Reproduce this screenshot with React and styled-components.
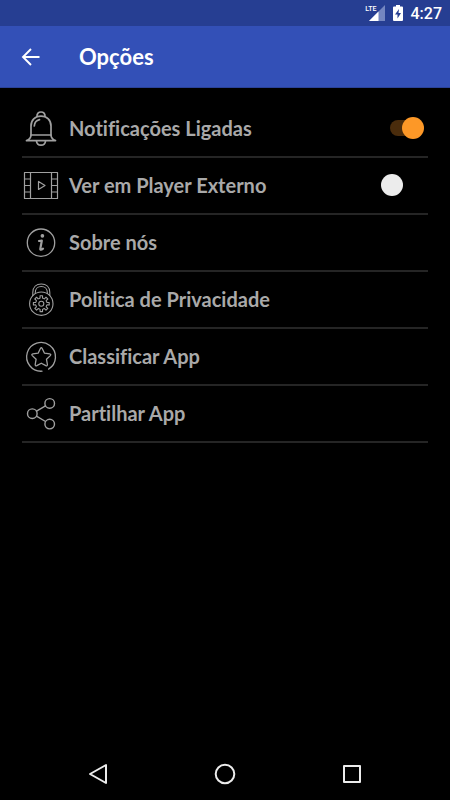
import React, {useState} from 'react';
import styled, {createGlobalStyle, css} from 'styled-components';

const GlobalStyle = createGlobalStyle`
*{
    box-sizing: border-box;
}
body{
    margin: 0;
    background: #000;
    font-family: Lato, "Open Sans", sans-serif;
    font-variant-ligatures: none;
}
`

const Page = styled.div`
min-height: 100vh;
display: flex;
flex-direction: column;
background: #000;
`

const StatusBar = styled.div`
height: 26px;
padding: 0 8px;
display: flex;
align-items: center;
justify-content: flex-end;
gap: 8px;
background: #263e92;
color: #fff;
`

const Clock = styled.time`
padding-top: 2px;
font: 500 16px/24px Roboto, sans-serif;
`

const Network = styled.div`
position: relative;
height: 16px;
`

// sits over the empty corner of the signal triangle
const NetworkType = styled.span`
position: absolute;
top: 0;
right: 8px;
font: 500 7px/8px Roboto, sans-serif;
`

const AppBar = styled.header`
height: 62px;
padding: 0 16px;
display: flex;
align-items: center;
gap: 33px;
background: #3350b7;
border-bottom: 1px solid #2a4298;
color: #fff;
`

const BackButton = styled.button`
width: 30px;
height: 30px;
padding: 0;
border: 0;
background: none;
color: inherit;
`

const Title = styled.h1`
margin: 0;
font-size: 22px;
line-height: 30px;
font-weight: 700;
`

const Options = styled.ul`
flex: 1;
margin: 0;
padding: 13px 22px;
list-style: none;
`

const Item = styled.li`
border-bottom: 2px solid #252525;
`

const rowStyle = css`
height: 55px;
display: flex;
align-items: center;
gap: 9px;
color: #a9a9a9;
font-size: 20px;
line-height: 24px;
font-weight: 700;
text-decoration: none;
`

const RowLabel = styled.label`
${rowStyle}
`

const RowLink = styled.a`
${rowStyle}
`

const RowText = styled.span`
flex: 1;
padding-bottom: 2px;
`

const Switch = styled.input`
appearance: none;
position: relative;
width: 43px;
height: 22px;
margin: 0 4px 2px 0;

&::before{
    content: "";
    position: absolute;
    top: 3px;
    left: 9px;
    width: 26px;
    height: 16px;
    border-radius: 8px;
    background: #000;
}
&::after{
    content: "";
    position: absolute;
    top: 0;
    left: 0;
    width: 22px;
    height: 22px;
    border-radius: 50%;
    background: #ececec;
}
&:checked::before{
    background: #4a2c0c;
}
&:checked::after{
    left: 21px;
    background: #fd9827;
}
`

const NavBar = styled.nav`
height: 52px;
padding: 0 35px;
display: grid;
grid-template-columns: repeat(3, 1fr);
`

const NavButton = styled.button`
display: flex;
align-items: center;
justify-content: center;
padding: 0;
border: 0;
background: none;
color: #ececec;
`

const OptionSvg = styled.svg`
flex: none;
width: 38px;
height: 37px;
fill: none;
stroke: #a0a0a0;
stroke-width: ${props => props.$weight || 1.3};
stroke-linecap: round;
stroke-linejoin: round;
`

const BellIcon = () => (
    <OptionSvg viewBox="0 0 38 37" $weight={1.7} aria-hidden="true">
        <path d="M15 6.5C14.8 3.6 16.5 2 19 2s4.2 1.6 4 4.5" />
        <path d="M9 25V16C9 10 13 6.2 19 6.2S29 10 29 16v9" />
        <path d="M9 25h20M9 25c0 2.7-1.8 4.6-4.5 5.6h29C30.8 29.6 29 27.7 29 25" />
        <path d="M14.5 31c.2 2.6 2 4.2 4.5 4.2s4.3-1.6 4.5-4.2" />
        <path d="M12.3 16c.2-3.4 2.1-5.6 5.2-6.3" />
    </OptionSvg>
)

const FilmIcon = () => (
    <OptionSvg viewBox="0 0 38 37" $weight={1.2} aria-hidden="true">
        <path d="M2.5 5.5h33v26h-33zM8.5 5.5v26M29.5 5.5v26" />
        <path d="M2.5 12h6M2.5 18.5h6M2.5 25h6M29.5 12h6M29.5 18.5h6M29.5 25h6" />
        <path d="M16.5 14.5v8l6.5-4z" />
    </OptionSvg>
)

const InfoIcon = () => (
    <OptionSvg viewBox="0 0 38 37" aria-hidden="true">
        <circle cx="19" cy="18.7" r="13.7" />
        <circle cx="20.4" cy="11.8" r="1.2" fill="#a0a0a0" />
        <path strokeWidth="2.2" d="M17 17l2.8-.3-1.5 8.2c-.2 1 1 1.1 2.7-.3" />
    </OptionSvg>
)

const teeth = Array.from({length: 8}, (_, i) => {
    const points = [[-22, 5.6], [-12, 5.8], [-9, 8], [9, 8], [12, 5.8], [22, 5.6]]
    return points.map(([deg, r]) => {
        const a = (i * 45 + deg) * Math.PI / 180
        return `${(19.3 + r * Math.sin(a)).toFixed(2)},${(22.7 - r * Math.cos(a)).toFixed(2)}`
    }).join(' ')
}).join(' ')

const LockIcon = () => (
    <OptionSvg viewBox="0 0 38 37" $weight={1.1} aria-hidden="true">
        <circle cx="19.3" cy="22.7" r="11.7" />
        <path d="M10.8 14.5v-3C10.8 6 14.5 3 19.3 3s8.5 3 8.5 8.5v3" />
        <path d="M13.3 12.5v-1c0-3.8 2.6-6 6-6s6 2.2 6 6v1" />
        <polygon points={teeth} />
        <circle cx="19.3" cy="22.7" r="2.5" />
    </OptionSvg>
)

const StarIcon = () => (
    <OptionSvg viewBox="0 0 38 37" aria-hidden="true">
        <path d="M20 33.2A14.4 14.4 0 1 1 26.6 31.1" />
        <path d="M18.4 10.5q.9-1.5 1.8 0l2.3 4.7 5.2.7q1.8.4.6 1.7l-3.8 3.7.9 5.2q0 1.8-1.6 1.1l-4.5-2.4-4.5 2.4q-1.6.7-1.6-1.1l.9-5.2-3.8-3.7q-1.2-1.3.6-1.7l5.2-.7z" />
    </OptionSvg>
)

const ShareIcon = () => (
    <OptionSvg viewBox="0 0 38 37" $weight={1.4} aria-hidden="true">
        <circle cx="10.3" cy="18.7" r="4.8" />
        <circle cx="27.7" cy="8.4" r="4.8" />
        <circle cx="27.7" cy="29.1" r="4.8" />
        <path d="M14.5 16.2l9-5.3M14.5 21.2l9 5.3" />
    </OptionSvg>
)

const links = [
    {text: 'Sobre nós', Icon: InfoIcon},
    {text: 'Politica de Privacidade', Icon: LockIcon},
    {text: 'Classificar App', Icon: StarIcon},
    {text: 'Partilhar App', Icon: ShareIcon},
]

const App = () => {
    const [notify, setNotify] = useState(true)
    const [external, setExternal] = useState(false)

    return (<Page>
        <GlobalStyle />
        <StatusBar>
            <Network>
                <svg width="16" height="16" viewBox="0 0 16 16" aria-hidden="true">
                    <path d="M16 0v16H0z" fill="#7486c0" />
                    <path d="M9.5 6.5V16H0z" fill="#fff" />
                </svg>
                <NetworkType>LTE</NetworkType>
            </Network>
            <svg width="10" height="16" viewBox="0 0 10 16" aria-hidden="true">
                <path d="M3 0h4v1.5h2q1 0 1 1V15q0 1-1 1H1q-1 0-1-1V2.5q0-1 1-1h2z" fill="#fff" />
                <path d="M6 4L2 9.5h2.5V13.5L8 8H5.5z" fill="#263e92" />
            </svg>
            <Clock>4:27</Clock>
        </StatusBar>
        <AppBar>
            <BackButton aria-label="Voltar">
                <svg width="30" height="30" viewBox="0 0 30 30" fill="none" stroke="currentColor" strokeWidth="1.9">
                    <path d="M23.5 15H7M15 7L7 15l8 8" />
                </svg>
            </BackButton>
            <Title>Opções</Title>
        </AppBar>
        <Options>
            <Item>
                <RowLabel>
                    <BellIcon />
                    <RowText>Notificações Ligadas</RowText>
                    <Switch type="checkbox" checked={notify} onChange={e => setNotify(e.target.checked)} />
                </RowLabel>
            </Item>
            <Item>
                <RowLabel>
                    <FilmIcon />
                    <RowText>Ver em Player Externo</RowText>
                    <Switch type="checkbox" checked={external} onChange={e => setExternal(e.target.checked)} />
                </RowLabel>
            </Item>
            {links.map(({text, Icon}) => (
                <Item key={text}>
                    <RowLink href="#">
                        <Icon />
                        <RowText>{text}</RowText>
                    </RowLink>
                </Item>
            ))}
        </Options>
        <NavBar>
            <NavButton aria-label="Voltar">
                <svg width="20" height="22" viewBox="0 0 20 22" fill="none" stroke="currentColor" strokeWidth="2" strokeLinejoin="round">
                    <path d="M18 2v18L2 11z" />
                </svg>
            </NavButton>
            <NavButton aria-label="Início">
                <svg width="22" height="22" viewBox="0 0 22 22" fill="none" stroke="currentColor" strokeWidth="2">
                    <circle cx="11" cy="11" r="9.3" />
                </svg>
            </NavButton>
            <NavButton aria-label="Recentes">
                <svg width="20" height="20" viewBox="0 0 20 20" fill="none" stroke="currentColor" strokeWidth="2" strokeLinejoin="round">
                    <path d="M2 2h16v16H2z" />
                </svg>
            </NavButton>
        </NavBar>
    </Page>)
}

export default App
